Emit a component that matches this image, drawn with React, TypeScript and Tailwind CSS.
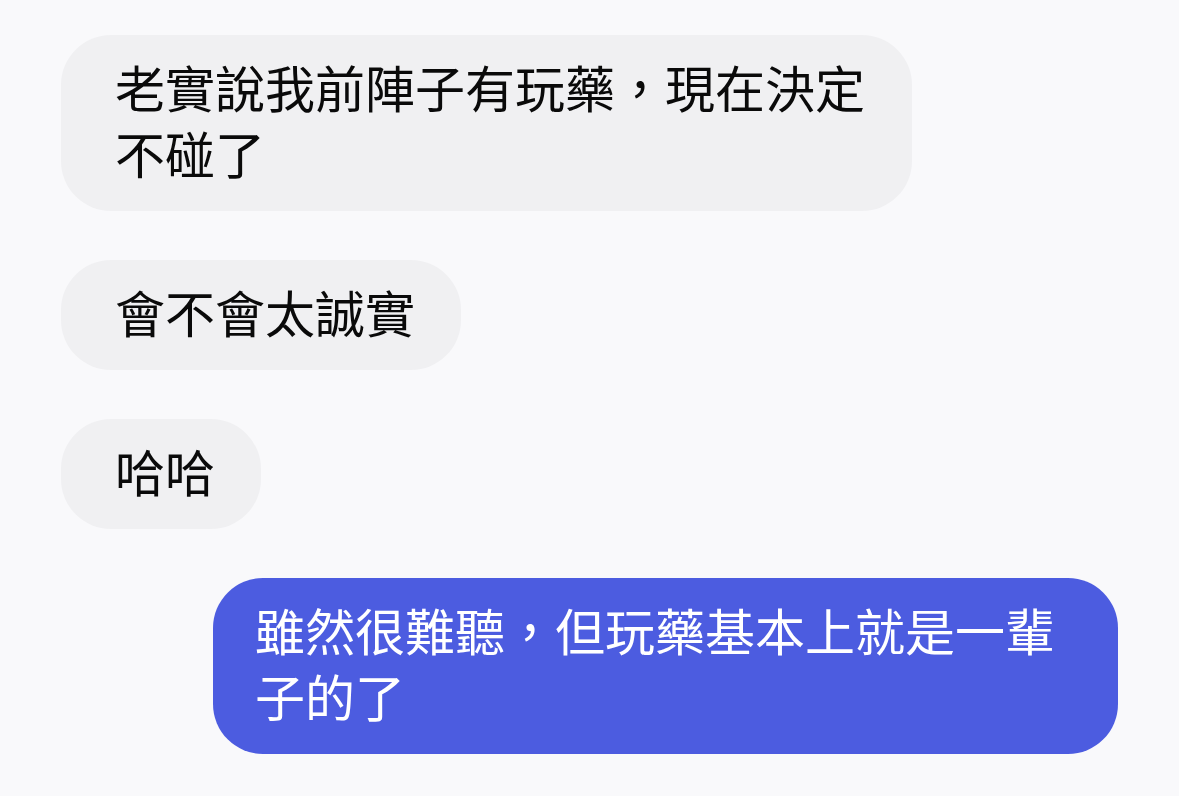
const messages = [
  { from: 'them', text: '老實說我前陣子有玩藥，現在決定不碰了' },
  { from: 'them', text: '會不會太誠實' },
  { from: 'them', text: '哈哈' },
  { from: 'me', text: '雖然很難聽，但玩藥基本上就是一輩子的了' },
];

export default function App() {
  return (
    <div
      className="min-h-[796px] w-full bg-[#f9f9fb] px-[61px] pt-[35px] pb-10"
      style={{ fontFamily: '"Noto Sans CJK TC", "Noto Sans", sans-serif' }}
    >
      <div className="flex flex-col gap-[49px]">
        {messages.map((m, i) =>
          m.from === 'them' ? (
            <div
              key={i}
              className="w-fit max-w-[851px] self-start rounded-[50px] bg-[#f0f0f2] pt-[18px] pb-[26px] pl-[54px] pr-[46px] text-[50px] leading-[66px] text-[#0a0a0a]"
            >
              {m.text}
            </div>
          ) : (
            <div
              key={i}
              className="w-fit max-w-[905px] self-end rounded-[50px] bg-[#4c5ce0] pt-[18px] pb-[26px] pl-[42px] pr-[46px] text-[50px] leading-[66px] text-white"
            >
              {m.text}
            </div>
          )
        )}
      </div>
    </div>
  );
}
